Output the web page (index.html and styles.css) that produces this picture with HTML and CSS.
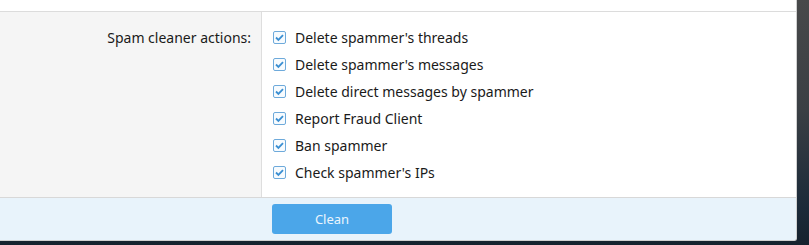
FILE: index.html
```html
<!DOCTYPE html>
<html>
<head>
<meta charset="utf-8">
<link rel="stylesheet" href="styles.css">
</head>
<body>
<div class="overlay">
  <div class="dialog">
    <div class="top-band"></div>
    <div class="form-row">
      <div class="form-label">Spam cleaner actions:</div>
      <div class="form-input">
        <ul class="choices">
          <li class="choice"><span class="cb"><svg viewBox="0 0 13 13" width="13" height="13"><path d="M3 6.5 L5.4 8.9 L10 4.1" fill="none" stroke="#3b8fd2" stroke-width="1.8"/></svg></span><span>Delete spammer's threads</span></li>
          <li class="choice"><span class="cb"><svg viewBox="0 0 13 13" width="13" height="13"><path d="M3 6.5 L5.4 8.9 L10 4.1" fill="none" stroke="#3b8fd2" stroke-width="1.8"/></svg></span><span>Delete spammer's messages</span></li>
          <li class="choice"><span class="cb"><svg viewBox="0 0 13 13" width="13" height="13"><path d="M3 6.5 L5.4 8.9 L10 4.1" fill="none" stroke="#3b8fd2" stroke-width="1.8"/></svg></span><span>Delete direct messages by spammer</span></li>
          <li class="choice"><span class="cb"><svg viewBox="0 0 13 13" width="13" height="13"><path d="M3 6.5 L5.4 8.9 L10 4.1" fill="none" stroke="#3b8fd2" stroke-width="1.8"/></svg></span><span>Report Fraud Client</span></li>
          <li class="choice"><span class="cb"><svg viewBox="0 0 13 13" width="13" height="13"><path d="M3 6.5 L5.4 8.9 L10 4.1" fill="none" stroke="#3b8fd2" stroke-width="1.8"/></svg></span><span>Ban spammer</span></li>
          <li class="choice"><span class="cb"><svg viewBox="0 0 13 13" width="13" height="13"><path d="M3 6.5 L5.4 8.9 L10 4.1" fill="none" stroke="#3b8fd2" stroke-width="1.8"/></svg></span><span>Check spammer's IPs</span></li>
        </ul>
      </div>
    </div>
    <div class="footer">
      <div class="footer-spacer"></div>
      <div class="footer-actions">
        <button class="btn-primary" type="button">Clean</button>
      </div>
    </div>
  </div>
</div>
</body>
</html>
```

FILE: styles.css
```css
html, body {
  margin: 0;
  padding: 0;
  height: 100%;
}
body {
  background: linear-gradient(to bottom, #48494a 0%, #3a3f44 45%, #1b2a39 85%, #16222e 100%);
  font-family: "Noto Sans", "Open Sans", sans-serif;
  font-size: 14px;
  color: #1a1a1a;
  overflow: hidden;
}
.overlay {
  width: 809px;
  height: 245px;
}
.dialog {
  width: 796px;
  height: 240px;
  background: #fff;
  border-right: 1px solid #d0d0d0;
  border-bottom: 1px solid #d0d0d0;
  border-bottom-right-radius: 3px;
  display: flex;
  flex-direction: column;
  overflow: hidden;
}
.top-band {
  height: 11px;
  border-bottom: 1px solid #dcdcdc;
  background: #fff;
}
.form-row {
  display: flex;
  height: 185px;
  border-bottom: 1px solid #d8d8d8;
}
.form-label {
  width: 251px;
  padding-right: 10px;
  background: #f5f5f5;
  border-right: 1px solid #dedede;
  text-align: right;
  padding-top: 12px;
  line-height: 27px;
  box-sizing: content-box;
}
.form-input {
  flex: 1;
  padding: 12px 0 0 11px;
}
.choices {
  list-style: none;
  margin: 0;
  padding: 0;
}
.choice {
  display: flex;
  align-items: center;
  height: 27px;
  line-height: 27px;
}
.cb {
  width: 11px;
  height: 11px;
  border: 1px solid #6eaadb;
  border-radius: 2px;
  background: #f7fbfe;
  margin-right: 9px;
  position: relative;
  flex: none;
}
.cb svg {
  position: absolute;
  left: -1px;
  top: -1px;
}
.footer {
  display: flex;
  flex: 1;
  background: #e8f3fb;
}
.footer-spacer {
  width: 262px;
}
.footer-actions {
  padding: 6px 0 0 10px;
}
.btn-primary {
  width: 120px;
  height: 30px;
  border: none;
  border-radius: 3px;
  background: #4ba6e9;
  color: #eaf5fd;
  font-family: "Noto Sans", "Open Sans", sans-serif;
  font-size: 13px;
  padding: 0;
  cursor: pointer;
}
```
